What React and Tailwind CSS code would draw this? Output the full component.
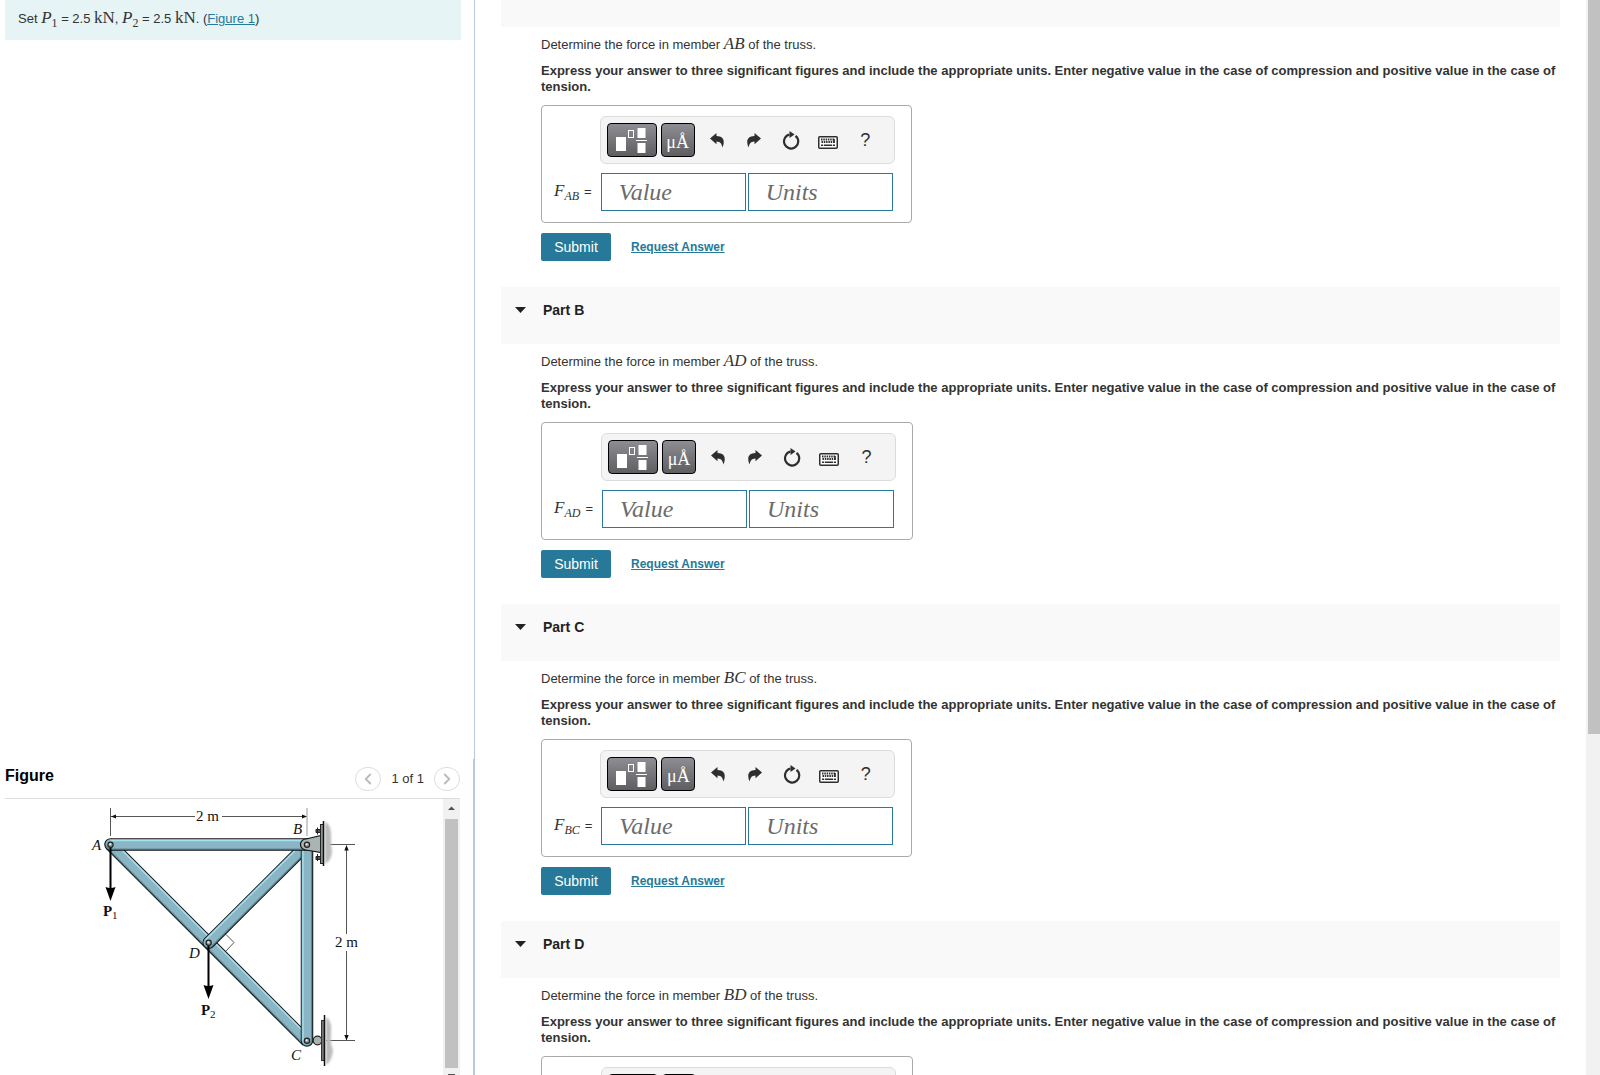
import React from 'react';
import { ChevronLeft, ChevronRight } from 'lucide-react';

const parts = [
  { id: 'A', member: 'AB' },
  { id: 'B', member: 'AD' },
  { id: 'C', member: 'BC' },
  { id: 'D', member: 'BD' },
];

const UndoIcon = ({ className }) => (
  <svg viewBox="0 0 14 15" width="14" height="15" className={className}>
    <path d="M0 5.500 6.500 0v3c5 .2 7.500 2.600 7.200 6.500-.1 2-.5 3.500-1.500 5C12 11 10.500 8.600 6.500 8.400v2.800z" fill="#2e2e2e" />
  </svg>
);

const ResetIcon = () => (
  <svg viewBox="0 0 18 20" width="18" height="20">
    <path d="M13.500 5.800A7.100 7.100 0 1 1 7.500 4.500" fill="none" stroke="#2e2e2e" strokeWidth="2.200" />
    <path d="M7.500 1 12.500 4.600 7.500 8z" fill="#2e2e2e" />
  </svg>
);

const KeyboardIcon = () => (
  <svg viewBox="0 0 20 13" width="20" height="13">
    <rect x=".75" y=".75" width="18.500" height="11.500" rx="1" fill="#fff" stroke="#2e2e2e" strokeWidth="1.500" />
    <path d="M3 3.500h14M3.500 6h13" stroke="#2e2e2e" strokeWidth="1.800" strokeDasharray="1.500 .8" />
    <path d="M3 9.200h2m.8 0h8.400m.8 0h2M16 3v4" stroke="#2e2e2e" strokeWidth="1.600" />
  </svg>
);

const TemplateIcon = () => (
  <svg viewBox="0 0 32 26" width="32" height="26">
    <rect x="0" y="10" width="10" height="14" fill="#fff" />
    <rect x="12.500" y="3.500" width="5" height="7" fill="none" stroke="#fff" />
    <rect x="21.500" y="1" width="8" height="10" fill="#fff" />
    <rect x="20" y="13" width="11" height="1" fill="#fff" />
    <rect x="21.500" y="16" width="8" height="10" fill="#fff" />
  </svg>
);

const MathText = ({ children }) => (
  <i className="font-['Liberation_Serif',serif] text-[17px] leading-none">{children}</i>
);

const Sub = ({ children }) => (
  <span className="font-['Liberation_Serif',serif] text-xs leading-none align-sub">{children}</span>
);

const Unit = ({ children }) => (
  <span className="font-['Liberation_Serif',serif] text-[17px] leading-none">{children}</span>
);

const Bar = ({ x1, y1, x2, y2, cap = 'butt', hx = 0, hy = 0 }) => (
  <g>
    <line x1={x1} y1={y1} x2={x2} y2={y2} stroke="#111" strokeWidth="12.500" strokeLinecap={cap} />
    <line x1={x1} y1={y1} x2={x2} y2={y2} stroke="#5b8796" strokeWidth="10.500" strokeLinecap={cap} />
    <line x1={x1 + hx / 6} y1={y1 + hy / 6} x2={x2 + hx / 6} y2={y2 + hy / 6} stroke="#8ab5c4" strokeWidth="9.200" strokeLinecap={cap} />
    <line x1={x1 + hx} y1={y1 + hy} x2={x2 + hx} y2={y2 + hy} stroke="#a4e2ee" strokeWidth="1.300" />
  </g>
);

const Pin = ({ cx, cy }) => (
  <g>
    <circle cx={cx} cy={cy} r="2.600" fill="#999" stroke="#222" strokeWidth="1.200" />
    <circle cx={cx - 0.4} cy={cy - 0.4} r="1" fill="#eee" />
  </g>
);

const TrussFigure = () => (
  <svg viewBox="5 799 438 290" width="438" height="290" className="shrink-0" role="img" aria-label="Truss">
    <defs>
      <filter id="soft" x="-50%" y="-20%" width="200%" height="140%">
        <feGaussianBlur stdDeviation="1.200" />
      </filter>
    </defs>

    {/* dimension lines */}
    <g stroke="#555" strokeWidth="1" fill="none">
      <path d="M110.500 808v28M111 816.500h84M222 816.500h84M326 844.500h29M346.500 846v88M346.500 951v89M326 1040.500h29" />
      <path d="M307 808v28" stroke="#999" />
    </g>
    <g fill="#111">
      <path d="m111 816.500 5-2v4zM307 816.500l-5-2v4zM346.500 845l-2.200 5.500h4.400zM346.500 1040.500l-2.200-5.500h4.400z" />
    </g>
    <path d="m226 934.500 8 8-8 8.500" fill="none" stroke="#555" />

    {/* members */}
    <Bar x1={110.5} y1={844.7} x2={307} y2={1041.2} hx={3} hy={-3} />
    <Bar x1={307} y1={844.7} x2={208.7} y2={942.7} cap="round" hx={-3} hy={-3} />
    <Bar x1={307} y1={846} x2={307} y2={1040.5} cap="round" hx={-4} />
    <Bar x1={110.5} y1={844.5} x2={307} y2={844.5} cap="round" hy={-4} />

    {/* pinned support at B */}
    <path d="M325 822q6 2 6 13t1 17q-1 9-7 12z" fill="#bbb" filter="url(#soft)" />
    <path d="M316 829.500h5v3h-5zM317.500 827.500v7M316 856.500h5v3h-5zM317.500 854v7" fill="#555" stroke="#222" />
    <path d="m306 839 15-3.500v17L306 850a5.500 5.500 0 0 1 0-11z" fill="#a9b4b3" stroke="#111" strokeWidth="1.200" />
    <rect x="320.500" y="824.500" width="3" height="39" fill="#8b9594" stroke="#222" />
    <path d="M323.500 821v45" stroke="#111" strokeWidth="1.500" />

    {/* roller at C */}
    <path d="M326 1017q6 3 5 15t2 18q-1 11-7 15z" fill="#bbb" filter="url(#soft)" />
    <circle cx="317.500" cy="1040.500" r="4.300" fill="#a9b4b3" stroke="#222" strokeWidth="1.200" />
    <rect x="321.500" y="1020.500" width="3" height="40" fill="#777" stroke="#333" />
    <path d="M324.500 1015v51" stroke="#111" strokeWidth="1.500" />

    {/* loads */}
    <g stroke="#000" strokeWidth="2">
      <path d="M110.500 846v44M208.500 944v44" />
    </g>
    <path d="M105.500 887q5 2 10 0l-5 14zM203.500 985q5 2 10 0l-5 14z" />

    <Pin cx={110.5} cy={844.7} />
    <Pin cx={307} cy={844.7} />
    <Pin cx={208.7} cy={942.7} />
    <Pin cx={307} cy={1040.7} />

    <g fontFamily="Liberation Serif, serif" fontSize="15" fill="#111">
      <text x="196" y="821">2 m</text>
      <text x="335" y="947">2 m</text>
      <g fontStyle="italic">
        <text x="92" y="850">A</text>
        <text x="293" y="834">B</text>
        <text x="189" y="958">D</text>
        <text x="291" y="1060">C</text>
      </g>
      <text x="103" y="916" fontWeight="bold">P</text>
      <text x="112" y="919" fontSize="11">1</text>
      <text x="201" y="1015" fontWeight="bold">P</text>
      <text x="210" y="1018" fontSize="11">2</text>
    </g>
  </svg>
);

const Toolbar = () => (
  <div className="flex items-center w-[295px] h-12 pl-1.5 border border-[#dcdcdc] rounded-md bg-[#f4f4f4]">
    <button aria-label="Templates" className="w-[50px] h-[34px] flex items-center justify-center border border-black rounded bg-linear-to-b from-[#8d8d93] to-[#5f5f62]">
      <TemplateIcon />
    </button>
    <button aria-label="Symbols" className="w-[34px] h-[34px] ml-1 pt-1 border border-black rounded bg-linear-to-b from-[#8d8d93] to-[#5f5f62] text-white font-['Liberation_Serif',serif] text-lg leading-none">
      μÅ
    </button>
    <div className="flex items-center ml-1">
      <button aria-label="Undo" className="w-[37px] h-8 flex items-center justify-center"><UndoIcon /></button>
      <button aria-label="Redo" className="w-[37px] h-8 flex items-center justify-center"><UndoIcon className="-scale-x-100" /></button>
      <button aria-label="Reset" className="w-[37px] h-8 flex items-center justify-center"><ResetIcon /></button>
      <button aria-label="Keyboard shortcuts" className="w-[37px] h-8 pt-1 flex items-center justify-center"><KeyboardIcon /></button>
      <button aria-label="Help" className="w-[37px] h-8 text-lg text-[#2e2e2e]">?</button>
    </div>
  </div>
);

const fieldStyle = "w-[145px] h-[38px] pl-[17px] pr-2 border border-[#267999] bg-white font-['Liberation_Serif',serif] text-2xl text-[#333] placeholder:italic placeholder:text-[#6b6b6b] outline-none";

const Part = ({ id, member }) => (
  <section>
    <h2 className={id === 'A' ? 'h-[27px] bg-[#f9f9f9] overflow-hidden' : 'h-[57px] bg-[#f9f9f9]'}>
      {id !== 'A' && (
        <button className="flex items-center pl-3.5 pt-[13px] text-sm font-bold text-[#222]">
          <svg viewBox="0 0 11 6" width="11" height="6"><path d="M0 0h11L5.500 6z" fill="#222" /></svg>
          <span className="ml-[17px]">Part {id}</span>
        </button>
      )}
    </h2>

    <div className="pl-10 pt-2 pb-[26px] text-[13px] leading-4">
      <p className="h-[18px] leading-[18px]">Determine the force in member <MathText>{member}</MathText> of the truss.</p>
      <p className="mt-2.5 font-bold">
        Express your answer to three significant figures and include the appropriate units. Enter negative value in the case of compression and positive value in the case of tension.
      </p>

      <div className="mt-2.5 w-fit h-[118px] pt-2.5 pl-3 pr-4 border border-[#aaa] rounded grid grid-cols-[auto_auto] gap-x-2 content-start">
        <div className="col-start-2"><Toolbar /></div>
        <label htmlFor={`value-${id}`} className="mt-2 flex items-center gap-[5px]">
          <span><MathText>F</MathText><i><Sub>{member}</Sub></i></span>
          <span>=</span>
        </label>
        <div className="mt-2 pl-px pt-px flex gap-0.5">
          <input id={`value-${id}`} type="text" placeholder="Value" className={fieldStyle} />
          <input aria-label="Units" type="text" placeholder="Units" className={fieldStyle} />
        </div>
      </div>

      <div className="mt-2.5 flex items-center">
        <button className="w-[70px] h-7 rounded-xs bg-[#267999] text-white text-sm">Submit</button>
        <a href="#" className="ml-5 text-xs font-bold underline text-[#267999]">Request Answer</a>
      </div>
    </div>
  </section>
);

const App = () => {
  return (
    <div className="h-screen flex overflow-hidden bg-white text-[#333] font-['Liberation_Sans',Arial,sans-serif]">
      <aside className="w-[475px] shrink-0 flex flex-col border-r border-[#b9c8de] pl-[5px]">
        <div className="h-10 shrink-0 mr-[13px] pl-[13px] pt-[9px] bg-[#e6f4f5] text-[13px] leading-5">
          Set <MathText>P</MathText><Sub>1</Sub> = 2.5 <Unit>kN</Unit>, <MathText>P</MathText><Sub>2</Sub> = 2.5 <Unit>kN</Unit>. (<a href="#figure" className="underline text-[#267999]">Figure 1</a>)
        </div>

        <div id="figure" className="mt-auto h-[316px] shrink-0 flex flex-col overflow-hidden border-r border-[#b9c8de]">
          <div className="h-10 shrink-0 mr-[13px] flex items-center border-b border-[#dcdcdc]">
            <h2 className="text-base font-bold text-black pb-1.5">Figure</h2>
            <div className="ml-auto flex items-center gap-2.5 text-[13px]">
              <button aria-label="Previous figure" className="w-[26px] h-6 flex items-center justify-center border border-[#ddd] rounded-full text-[#bbb]"><ChevronLeft size={18} strokeWidth={2.5} /></button>
              <span>1 of 1</span>
              <button aria-label="Next figure" className="w-[26px] h-6 flex items-center justify-center border border-[#ddd] rounded-full text-[#bbb]"><ChevronRight size={18} strokeWidth={2.5} /></button>
            </div>
          </div>
          <div className="flex flex-1 min-h-0 mr-[13px]">
            <TrussFigure />
            <div className="w-[17px] shrink-0 flex flex-col items-center bg-[#f1f1f1]">
              <svg viewBox="0 0 17 20" width="17" height="20" className="shrink-0"><path d="M5 11h7L8.500 7.500z" fill="#505050" /></svg>
              <div className="w-[13px] flex-1 bg-[#c1c1c1]"></div>
              <svg viewBox="0 0 17 7" width="17" height="7" className="shrink-0"><path d="M5 6h7v1H5z" fill="#505050" /></svg>
            </div>
          </div>
        </div>
      </aside>

      <main className="flex-1 min-w-0 overflow-hidden px-[26px]">
        {parts.map((part) => <Part key={part.id} {...part} />)}
      </main>

      <div className="w-3.5 shrink-0 pl-0.5 bg-[#f1f1f1]">
        <div className="h-[734px] bg-[#c1c1c1]"></div>
      </div>
    </div>
  );
};

export default App;
